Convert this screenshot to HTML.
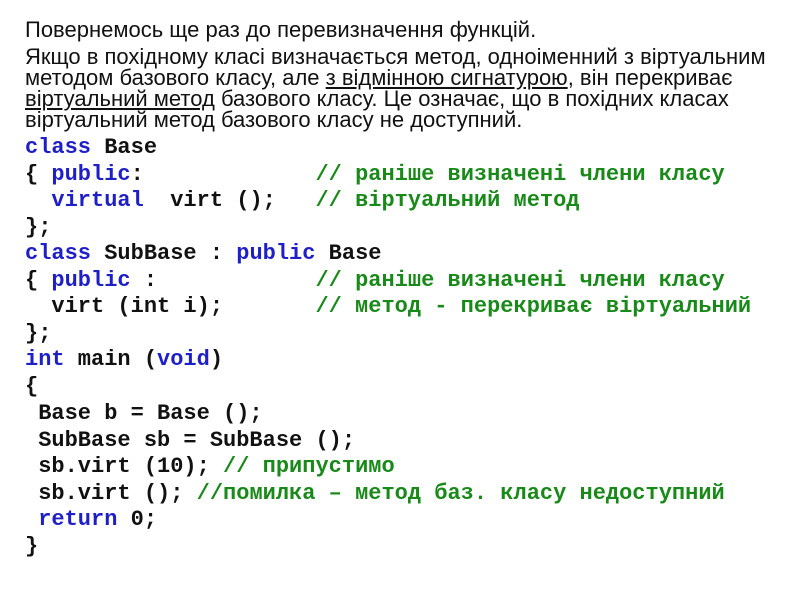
<!DOCTYPE html>
<html><head><meta charset="utf-8"><style>
body{margin:0;width:800px;height:600px;background:#fff;position:relative;overflow:hidden}
.t{position:absolute;left:25px;font-family:"Liberation Sans",sans-serif;font-size:22px;line-height:21px;color:#111;white-space:pre}
.c{position:absolute;left:25px;font-family:"Liberation Mono","Courier New",monospace;font-weight:bold;font-size:22px;line-height:26px;color:#111;white-space:pre}
.k{color:#1f1fc8}.g{color:#198a19}
u{text-decoration-thickness:1.5px;text-underline-offset:2px}
</style></head><body>
<div class="t" style="top:19px">Повернемось ще раз до перевизначення функцій.</div>
<div class="t" style="top:46px">Якщо в похідному класі визначається метод, одноіменний з віртуальним</div>
<div class="t" style="top:67px">методом базового класу, але <u>з відмінною сигнатурою</u>, він перекриває</div>
<div class="t" style="top:88px"><u>віртуальний метод</u> базового класу. Це означає, що в похідних класах</div>
<div class="t" style="top:109px">віртуальний метод базового класу не доступний.</div>
<div class="c" style="top:135px"><span class="k">class</span> Base</div>
<div class="c" style="top:162px">{ <span class="k">public</span>:             <span class="g">// раніше визначені члени класу</span></div>
<div class="c" style="top:188px">  <span class="k">virtual</span>  virt ();   <span class="g">// віртуальний метод</span></div>
<div class="c" style="top:215px">};</div>
<div class="c" style="top:241px"><span class="k">class</span> SubBase : <span class="k">public</span> Base</div>
<div class="c" style="top:268px">{ <span class="k">public</span> :            <span class="g">// раніше визначені члени класу</span></div>
<div class="c" style="top:294px">  virt (int i);       <span class="g">// метод - перекриває віртуальний</span></div>
<div class="c" style="top:321px">};</div>
<div class="c" style="top:347px"><span class="k">int</span> main (<span class="k">void</span>)</div>
<div class="c" style="top:374px">{</div>
<div class="c" style="top:401px"> Base b = Base ();</div>
<div class="c" style="top:428px"> SubBase sb = SubBase ();</div>
<div class="c" style="top:454px"> sb.virt (10); <span class="g">// припустимо</span></div>
<div class="c" style="top:481px"> sb.virt (); <span class="g">//помилка – метод баз. класу недоступний</span></div>
<div class="c" style="top:507px"> <span class="k">return</span> 0;</div>
<div class="c" style="top:534px">}</div>
</body></html>
